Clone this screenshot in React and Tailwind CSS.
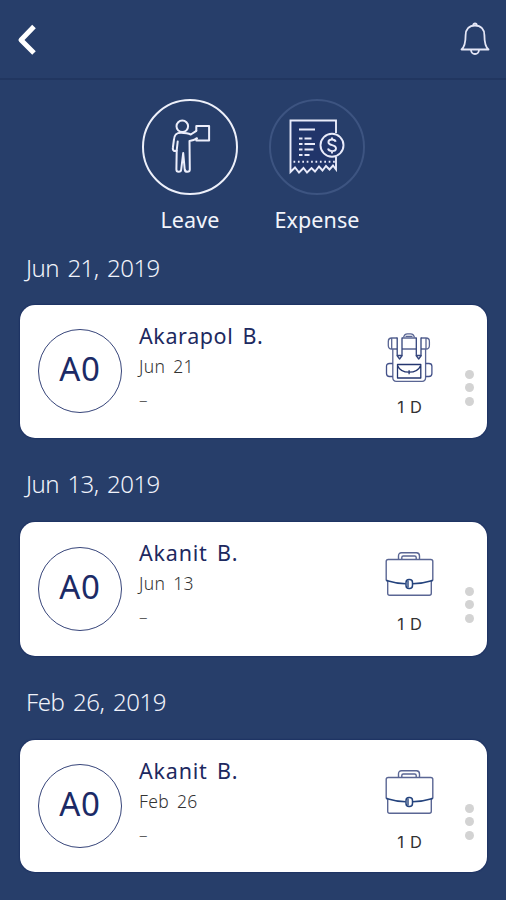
const requests = [
  {
    id: 1,
    date: 'Jun 21, 2019',
    day: 'Jun 21',
    name: 'Akarapol B.',
    icon: 'backpack',
    titleClass: 'h-[56px] pt-[7px] tracking-[-0.5px]',
    cardClass: 'h-[133px]',
    avatarClass: 'mt-[24px]',
    dotsClass: 'mt-[65px]',
    nameClass: 'tracking-[0.6px]',
  },
  {
    id: 2,
    date: 'Jun 13, 2019',
    day: 'Jun 13',
    name: 'Akanit B.',
    icon: 'briefcase',
    titleClass: 'h-[59px] pt-[9px] tracking-[-0.5px]',
    cardClass: 'h-[134px]',
    avatarClass: 'mt-[25px]',
    dotsClass: 'mt-[65px]',
    nameClass: 'tracking-[0.8px]',
  },
  {
    id: 3,
    date: 'Feb 26, 2019',
    day: 'Feb 26',
    name: 'Akanit B.',
    icon: 'briefcase',
    titleClass: 'h-[59px] pt-[9px] tracking-[-0.4px]',
    cardClass: 'h-[132px]',
    avatarClass: 'mt-[24px]',
    dotsClass: 'mt-[64px]',
    nameClass: 'tracking-[0.8px]',
  },
]

function BackIcon() {
  return (
    <svg width="24" height="34" viewBox="0 0 24 34" fill="none" stroke="#fff" strokeWidth="5">
      <path d="M19 4.500 6 18l13 13" strokeLinejoin="round" />
    </svg>
  )
}

function BellIcon() {
  return (
    <svg width="32" height="36" viewBox="0 0 32 36" fill="none" stroke="#e4e6f6" strokeWidth="1.8">
      <path d="M16 4.500c-6 0-9.400 4-9.400 9.700 0 7-.6 11.300-4.100 14.300h27c-3.500-3-4.100-7.300-4.100-14.300C25.400 8.500 22 4.500 16 4.500Z" strokeLinejoin="round" />
      <path d="M14.300 4.200a1.700 1.700 0 0 1 3.400 0M12 29c.3 2.900 1.800 4 4 4s3.700-1.100 4-4" />
    </svg>
  )
}

function LeaveIcon() {
  return (
    <svg
      width="96"
      height="96"
      viewBox="0 0 96 96"
      fill="none"
      stroke="#eceefb"
      strokeWidth="2"
      strokeLinecap="round"
      strokeLinejoin="round"
      className="shrink-0"
    >
      <circle cx="40.300" cy="27.300" r="5.800" />
      <path d="M54.300 31.500V27h12.800v14.500H54.300v-2" />
      <path d="M54.300 31.800l-5.500 3.700c-2.600-1.300-5.800-1.700-9.800-1.700-5.200 0-6.800 2.200-7.100 7.200l-1 7.500c-.3 1.800.2 3 1.300 3.500l2.500-.2-.3 18.700c0 1.500.8 2.300 2.300 2.300s2.400-.8 2.500-2.300l2-16.500 1.500 16.500c.2 1.500 1 2.300 2.700 2.300s2.400-.8 2.400-2.300L47.500 42c3-.4 5.300-1.200 7.500-2.700" />
      <path d="M34.700 51.500l1-9" />
    </svg>
  )
}

function ExpenseIcon() {
  return (
    <svg
      width="96"
      height="96"
      viewBox="0 0 96 96"
      fill="none"
      stroke="#e9ebfa"
      strokeWidth="1.900"
      className="shrink-0"
    >
      <path
        d="M67 34V21.500H21.500V73l4.500-4.500 4 5 4.500-4.500 3.500 4.500 4.500-4.500 3.500 3.500 4-5 3.500 4 3.500-4.500 3.500 3.500 3.500-4 3 4V58"
        className="fill-[#21356a]"
      />
      <path d="M30 30.500h16M30 39.500h3.500M35.500 39.500h7M30 45h3.500M35.500 45h10.500M30 50.500h3.500M35.500 50.500h9M30 56h3.500M35.500 56h5" />
      <path d="M24.500 62.800h41.500" strokeDasharray="1.700 2.700" strokeWidth="2" />
      <circle cx="63" cy="46.200" r="11.500" className="fill-[#21356a]" />
      <path d="M66.700 42.700c-.5-1.500-1.900-2.200-3.700-2.200-2.200 0-3.600 1-3.600 2.700 0 4 7.600 1.700 7.600 6 0 1.800-1.500 2.900-3.900 2.900-2.200 0-3.700-.9-4.100-2.500M63 38.500v2M63 52v2.500" />
    </svg>
  )
}

function BackpackIcon() {
  return (
    <svg width="50" height="52" viewBox="0 0 50 52" fill="none" stroke="#596593" strokeWidth="1.300" strokeLinejoin="round">
      <path d="M18.500 5.700c.5-2.600 2-3.900 4-3.900h3c2 0 3.500 1.300 4 3.900M20.500 4.300h7" />
      <path d="M12.200 6H6.700c-2 0-3.400 1.400-3.400 3.500v4c0 2.200 1.400 3.500 3.400 3.500h5.500M17 6h14.300M17 17h14.300M36 6h5c2 0 3.400 1.400 3.400 3.500v4c0 2.200-1.400 3.500-3.400 3.500h-5M6.700 6.500v10M41 6.500v10" />
      <path d="M12.200 5.500V23M17 5.500V23M31.300 5.500V23M36 5.500V23M12 23.500h5.200l-2.600 3.500zM31.100 23.500h5.200l-2.600 3.500z" stroke="#34457c" />
      <path d="M7.800 17v28.500c0 2.400 1.200 3.800 3.500 3.800h25.800c2.300 0 3.500-1.400 3.500-3.800V17" />
      <path d="M7.800 31.500H4.500c-2 0-3 .9-3 2.800v7.200c0 2 1 3 3 3h3.300M40.600 31.500h3.300c2 0 3 .9 3 2.800v7.200c0 2-1 3-3 3h-3.300" stroke="#44528a" />
      <path d="M12.500 32.500h23.300V46H12.500zM12.800 34c1.800 4.500 5.500 6.200 11.300 6.200s9.500-1.700 11.300-6.200M24.100 38.200v4" stroke="#24366f" />
    </svg>
  )
}

function BriefcaseIcon() {
  return (
    <svg width="50" height="52" viewBox="0 0 50 52" fill="none" stroke="#5a6694" strokeWidth="1.400" strokeLinejoin="round">
      <path d="M13.500 10V7c0-2 1-3.200 3-3.200h15c2 0 3 1.200 3 3.200v3M16.800 10V8.500c0-1 .5-1.500 1.500-1.500h11.400c1 0 1.500.5 1.500 1.500V10" />
      <path d="M1.200 31V12.500c0-1.300.7-2 2-2h42.600c1.300 0 2 .7 2 2V31l-1.500.7v12.500c0 1.300-.7 2-2 2H4.700c-1.300 0-2-.7-2-2V31.700z" />
      <path d="M1.200 31.500c6.500 2 12.500 3 19.500 3.300M27.500 34.800c7-.3 13.800-1.300 20.300-3.300" stroke="#24437d" />
      <rect x="21" y="30.500" width="6.500" height="9" rx="3" stroke="#24437d" strokeWidth="1.500" />
      <path d="M23 31.500v7" stroke="#24437d" />
    </svg>
  )
}

function Tab({ label, active, children }) {
  return (
    <button type="button" className="flex w-24 flex-col items-center">
      <span
        className={`flex size-24 items-center justify-center rounded-full border-2 ${
          active ? 'border-[#edf0fa]' : 'border-[#3d5481]'
        }`}
      >
        {children}
      </span>
      <span className="mt-[9px] pl-px text-[21.500px] leading-[32px] tracking-[0.1px] whitespace-nowrap text-[#f2f4fb]">
        {label}
      </span>
    </button>
  )
}

function RequestCard({ request }) {
  return (
    <div className={`flex rounded-[15px] bg-white pl-[18px] shadow-[0_0_2px_#0b1b55] ${request.cardClass}`}>
      <div
        className={`flex size-[84px] shrink-0 items-center justify-center rounded-full border border-[#37457a] pb-1 text-[33px] tracking-[0.8px] text-[#1b2a66] ${request.avatarClass}`}
      >
        A0
      </div>
      <div className="ml-[17px] flex w-[230px] flex-col pt-[16px]">
        <p className={`h-[30px] text-[21.500px] leading-[30px] text-[#1d2960] [word-spacing:3px] ${request.nameClass}`}>
          {request.name}
        </p>
        <p className="h-[30px] text-[17.500px] leading-[30px] font-light tracking-[0.35px] text-[#333] [word-spacing:3px]">
          {request.day}
        </p>
        <p className="mt-1 text-[17px] leading-[30px] font-light text-[#555]">–</p>
      </div>
      <div className="ml-[16px] flex w-[50px] flex-col items-center pt-[27px]">
        {request.icon === 'backpack' ? <BackpackIcon /> : <BriefcaseIcon />}
        <p className="mt-[13px] font-['Inter',sans-serif] text-[16.500px] leading-[20px] tracking-[0.7px] text-[#333]">
          1 D
        </p>
      </div>
      <div className={`ml-[30px] flex flex-col gap-[4.300px] ${request.dotsClass}`}>
        <span className="size-[9px] rounded-full bg-[#d3d3d3]" />
        <span className="size-[9px] rounded-full bg-[#d3d3d3]" />
        <span className="size-[9px] rounded-full bg-[#d3d3d3]" />
      </div>
    </div>
  )
}

export default function App() {
  return (
    <div className="h-[900px] w-[506px] overflow-hidden bg-[#273e6a] font-['Noto_Sans',sans-serif]">
      <header className="flex h-[80px] items-center justify-between border-b-2 border-[#213660] px-[15px]">
        <BackIcon />
        <BellIcon />
      </header>

      <div className="flex justify-center gap-[31px] pt-[19px]">
        <Tab label="Leave" active>
          <LeaveIcon />
        </Tab>
        <Tab label="Expense">
          <ExpenseIcon />
        </Tab>
      </div>

      <main className="mt-[13px] flex flex-col gap-[25px] pr-[19px] pl-5">
        {requests.map((r) => (
          <section key={r.id}>
            <h2
              className={`pl-1.5 text-[24px] leading-[24px] font-light text-[#f0f2fa] [word-spacing:2.500px] ${r.titleClass}`}
            >
              {r.date}
            </h2>
            <RequestCard request={r} />
          </section>
        ))}
      </main>
    </div>
  )
}
